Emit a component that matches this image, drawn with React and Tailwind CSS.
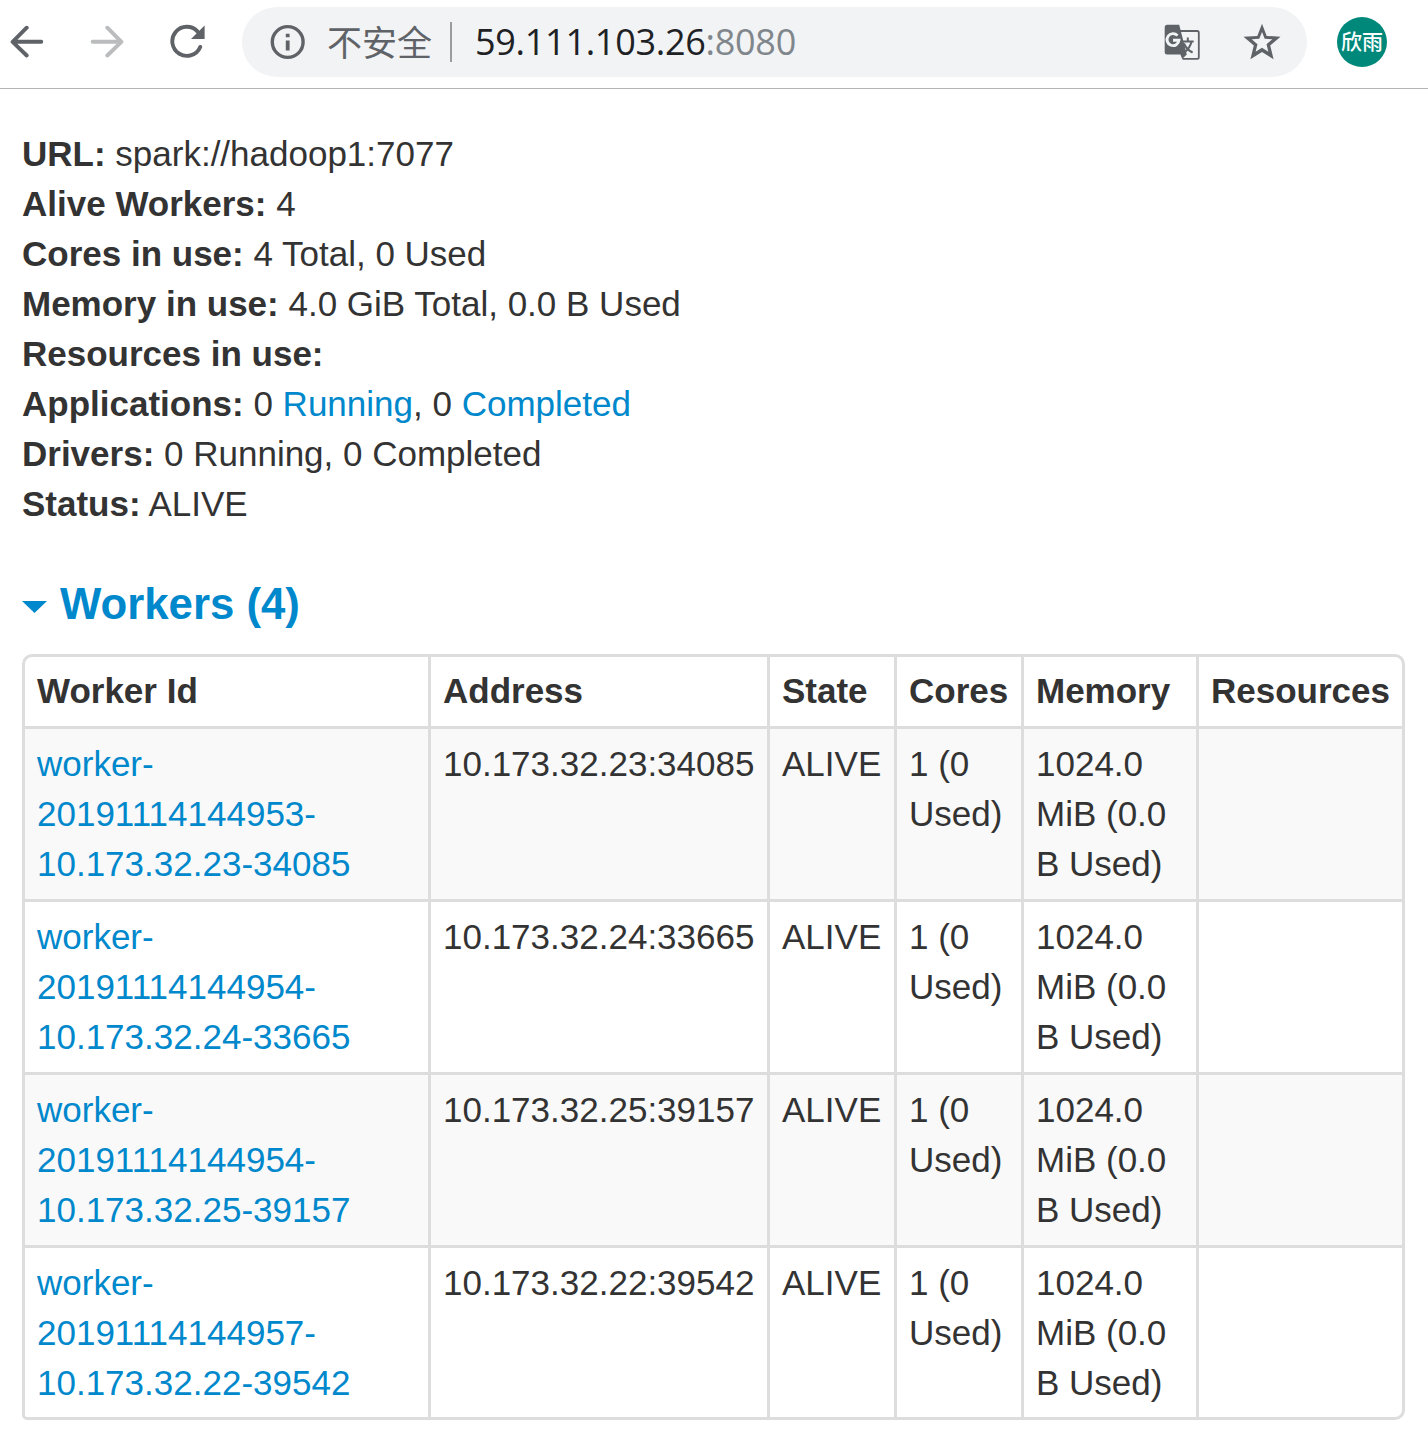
const workers = [
  { stamp: "20191114144953-", host: "10.173.32.23", port: "34085" },
  { stamp: "20191114144954-", host: "10.173.32.24", port: "33665" },
  { stamp: "20191114144954-", host: "10.173.32.25", port: "39157" },
  { stamp: "20191114144957-", host: "10.173.32.22", port: "39542" },
];

const columns = [
  { name: "Worker Id", width: "w-[406px]" },
  { name: "Address", width: "w-[339px]" },
  { name: "State", width: "w-[127px]" },
  { name: "Cores", width: "w-[127px]" },
  { name: "Memory", width: "w-[175px]" },
  { name: "Resources", width: "w-[209px]" },
];

function BackIcon() {
  return (
    <svg width="34" height="34" viewBox="0 0 34 34" fill="none" stroke="#5f6368" strokeWidth="3.9" strokeLinecap="round" strokeLinejoin="round">
      <path d="M31.3 16.8H2.8M16.7 2.7L2.6 16.8l14.1 13.7" />
    </svg>
  );
}

function ForwardIcon() {
  return (
    <svg width="34" height="34" viewBox="0 0 34 34" fill="none" stroke="#babcbe" strokeWidth="3.9" strokeLinecap="round" strokeLinejoin="round">
      <path d="M2.6 16.8h28.6M17.3 2.7l14.1 14.1-14.1 13.7" />
    </svg>
  );
}

function ReloadIcon() {
  return (
    <svg width="36" height="36" viewBox="0 0 36 36" fill="none">
      <path d="M27.6 7.6A14.5 14.5 0 1 0 30.2 22.9" stroke="#5f6368" strokeWidth="3.9" strokeLinecap="round" />
      <path d="M34.6 1.6V15H21z" fill="#5f6368" />
    </svg>
  );
}

function InfoIcon() {
  return (
    <svg width="36" height="36" viewBox="0 0 36 36" fill="none">
      <circle cx="17.7" cy="18" r="15.4" stroke="#5f6368" strokeWidth="3.4" />
      <path d="M15.8 9.7h3.8v3.6h-3.8zM15.8 16.4h3.8v10h-3.8z" fill="#5f6368" />
    </svg>
  );
}

function TranslateIcon() {
  return (
    <svg width="37" height="37" viewBox="0 0 37 37" fill="none">
      <path d="M15 7h18.2a1.6 1.6 0 0 1 1.6 1.6v24.6a1.6 1.6 0 0 1-1.6 1.6H18.5" stroke="#5f6368" strokeWidth="1.8" />
      <path d="M18 17.5h11.7M23.8 13.5v4M27.6 17.5c-1.2 4.8-3.8 8.6-7.6 11.2M20 19.5c1.6 3.8 4.6 7.2 8.6 9" stroke="#5f6368" strokeWidth="2" />
      <path d="M3.2.8h12L22.8 30.5l-4.6 4.6-1.8-4.6H3.2A2.5 2.5 0 0 1 .7 28V3.3A2.5 2.5 0 0 1 3.2.8z" fill="#5f6368" />
      <path d="M13.5 11.6a6 6 0 1 0 1.5 4.6H9" stroke="#f1f3f4" strokeWidth="2.9" />
    </svg>
  );
}

function StarIcon() {
  return (
    <svg width="38" height="38" viewBox="0 0 38 38" fill="#5f6368">
      <path
        fillRule="evenodd"
        d="M19 .8l4.7 12.1 13.8.9-10.3 8.6 3.4 13.8L19 28.9 7.4 36.2l3.4-13.8L.5 13.8l13.8-.9zM19 8.9l-2.7 6.8-7.6.6 5.8 4.9-1.9 7.5L19 24.8l6.4 3.9-1.9-7.5 5.8-4.9-7.6-.6z"
      />
    </svg>
  );
}

function Link({ children }) {
  return <a href="#" className="text-[#0088cc]">{children}</a>;
}

function Toolbar() {
  return (
    <header className="flex h-[89px] items-start border-b border-[#b4b5b7] bg-white pt-[7px] font-['Open_Sans','Noto_Sans_CJK_SC',sans-serif]">
      <div className="flex h-[70px] w-[242px] shrink-0 items-center pl-[10px]">
        <BackIcon />
        <span className="ml-[46px]"><ForwardIcon /></span>
        <span className="ml-[46px]"><ReloadIcon /></span>
      </div>
      <div className="flex h-[70px] w-[1065px] shrink-0 items-center rounded-full bg-[#f1f3f4] pl-[28px] pr-[26px]">
        <InfoIcon />
        <span className="ml-[21px] w-[105px] whitespace-nowrap pb-[2px] font-['Noto_Sans_CJK_SC',sans-serif] text-[35px] font-normal leading-[48px] text-[#5f6368]">不安全</span>
        <span className="ml-[18px] h-10 w-[2px] bg-[#9a9da0]" />
        <span className="ml-[23px] whitespace-nowrap text-[36px] leading-[50px] tracking-[-0.28px] text-[#202124]">
          59.111.103.26<span className="text-[#80868b]">:8080</span>
        </span>
        <span className="ml-auto"><TranslateIcon /></span>
        <span className="ml-[42px]"><StarIcon /></span>
      </div>
      <div className="ml-[30px] mt-[10px] flex size-[50px] justify-center rounded-full bg-[#00897b] font-['Noto_Sans_CJK_SC',sans-serif] text-[21px] font-medium leading-[47px] text-white">
        欣雨
      </div>
    </header>
  );
}

function Summary() {
  return (
    <ul>
      <li><strong>URL:</strong> spark://hadoop1:7077</li>
      <li><strong>Alive Workers:</strong> 4</li>
      <li><strong>Cores in use:</strong> 4 Total, 0 Used</li>
      <li><strong>Memory in use:</strong> 4.0 GiB Total, 0.0 B Used</li>
      <li><strong>Resources in use:</strong></li>
      <li><strong>Applications:</strong> 0 <Link>Running</Link>, 0 <Link>Completed</Link></li>
      <li><strong>Drivers:</strong> 0 Running, 0 Completed</li>
      <li><strong>Status:</strong> ALIVE</li>
    </ul>
  );
}

function WorkersTable() {
  const cell = "border-l-[3px] border-t-[3px] border-[#dddddd] px-3 py-[10px] align-top first:border-l-0";
  return (
    <div className="mt-[25px] h-[766px] w-[1383px] overflow-hidden rounded-[10px] rounded-bl-[5px] border-[3px] border-[#dddddd]">
      <table className="-ml-[3px] w-[1383px] table-fixed border-separate border-spacing-0">
        <thead>
          <tr>
            {columns.map((c) => (
              <th key={c.name} className={`${c.width} whitespace-nowrap border-l-[3px] border-[#dddddd] pb-[10px] pl-3 pt-[9px] text-left font-bold first:border-transparent`}>
                {c.name}
              </th>
            ))}
          </tr>
        </thead>
        <tbody>
          {workers.map((w) => (
            <tr key={w.port} className="odd:bg-[#f9f9f9]">
              <td className={`${cell} first:pl-[15px]`}>
                <Link>worker-<br />{w.stamp}<br />{w.host}-{w.port}</Link>
              </td>
              <td className={`${cell} whitespace-nowrap`}>{w.host}:{w.port}</td>
              <td className={`${cell} whitespace-nowrap`}>ALIVE</td>
              <td className={`${cell} whitespace-nowrap`}>1 (0<br />Used)</td>
              <td className={`${cell} whitespace-nowrap`}>1024.0<br />MiB (0.0<br />B Used)</td>
              <td className={cell} />
            </tr>
          ))}
        </tbody>
      </table>
    </div>
  );
}

export default function App() {
  return (
    <div className="h-[1436px] w-[1428px] overflow-hidden bg-white">
      <Toolbar />
      <main className="pl-[22px] pt-10 font-['Liberation_Sans',Arial,sans-serif] text-[35px] leading-[50px] text-[#333333]">
        <Summary />
        <h4 className="mt-[50px] flex items-center text-[43.75px] font-bold leading-[50px] text-[#0088cc]">
          <svg className="mt-[5px]" width="25" height="12" viewBox="0 0 25 12">
            <path d="M0 0h25L12.5 12z" fill="#0088cc" />
          </svg>
          <a href="#" className="ml-[13px]">Workers (4)</a>
        </h4>
        <WorkersTable />
      </main>
    </div>
  );
}
